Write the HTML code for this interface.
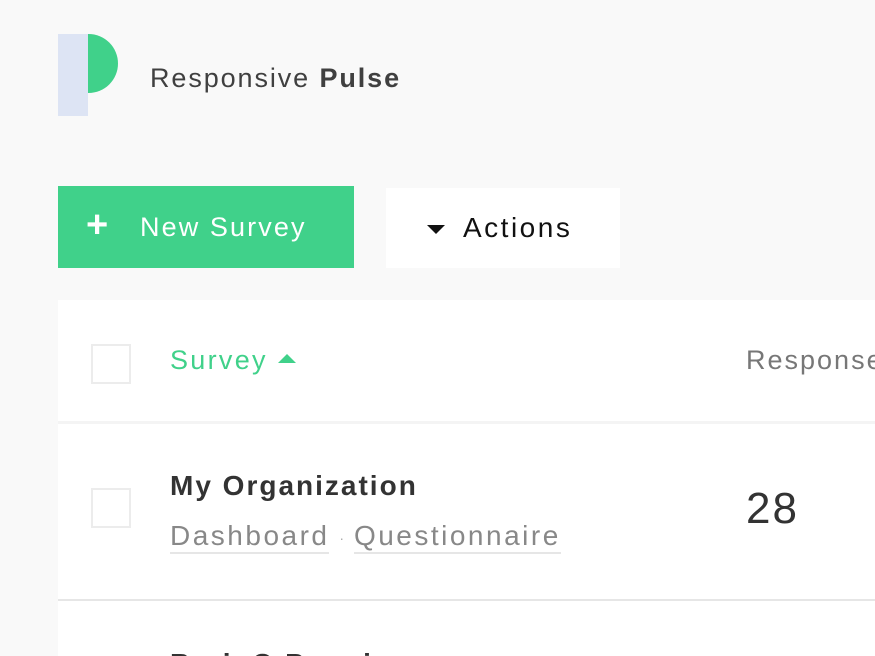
<!DOCTYPE html>
<html style="overflow:hidden;height:656px"><head><style>
body{margin:0;width:875px;height:656px;overflow:hidden;background:#f9f9f9;font-family:"Liberation Sans",sans-serif;position:relative}
.a{position:absolute;white-space:nowrap}
</style></head><body>
<div class="a" style="left:58px;top:34px;width:30px;height:82px;background:#dde4f4"></div>
<div class="a" style="left:88px;top:34px;width:30px;height:59px;background:#40d18a;border-radius:0 30px 30px 0"></div>
<div class="a" style="left:150px;top:63px;font-size:27px;color:#404040;letter-spacing:1.9px">Responsive <b>Pulse</b></div>
<div class="a" style="left:58px;top:186px;width:296px;height:82px;background:#40d18a;color:#fff;font-size:27px;line-height:82px"><span style="position:absolute;left:28px;font-size:38px;font-weight:bold;top:-2px">+</span><span style="position:absolute;left:82px;letter-spacing:2.1px">New Survey</span></div>
<div class="a" style="left:386px;top:188px;width:234px;height:80px;background:#fff;color:#111;font-size:28px;line-height:80px"><span style="position:absolute;left:41px;top:37px;width:0;height:0;border-left:9px solid transparent;border-right:9px solid transparent;border-top:9px solid #111"></span><span style="position:absolute;left:77px;letter-spacing:2.5px">Actions</span></div>
<div class="a" style="left:58px;top:300px;width:817px;height:356px;background:#fff"></div>
<div class="a" style="left:58px;top:421px;width:817px;height:3px;background:#f4f4f4"></div>
<div class="a" style="left:58px;top:599px;width:817px;height:2px;background:#e6e6e6"></div>
<div class="a" style="left:91px;top:344px;width:36px;height:36px;border:2px solid #ececec"></div>
<div class="a" style="left:170px;top:345px;font-size:27px;color:#40d18a;letter-spacing:2.3px">Survey</div>
<div class="a" style="left:278px;top:354px;width:0;height:0;border-left:9px solid transparent;border-right:9px solid transparent;border-bottom:9px solid #40d18a"></div>
<div class="a" style="left:746px;top:345px;font-size:27px;color:#777;letter-spacing:2px">Responses</div>
<div class="a" style="left:91px;top:488px;width:36px;height:36px;border:2px solid #ececec"></div>
<div class="a" style="left:170px;top:470px;font-size:28px;font-weight:bold;color:#333;letter-spacing:2px">My Organization</div>
<div class="a" style="left:170px;top:520px;font-size:28px;color:#888;letter-spacing:2.5px"><span style="border-bottom:2px solid #e6e6e6;padding-bottom:1px">Dashboard</span><span style="font-size:14px;vertical-align:middle;color:#aaa;letter-spacing:0;margin:0 6px"> · </span><span style="border-bottom:2px solid #e6e6e6;padding-bottom:1px">Questionnaire</span></div>
<div class="a" style="left:746px;top:484px;font-size:44px;color:#333;letter-spacing:2px">28</div>
<div class="a" style="left:170px;top:648px;font-size:28px;font-weight:bold;color:#333;letter-spacing:2px">BrainQ Premium</div>
</body></html>
